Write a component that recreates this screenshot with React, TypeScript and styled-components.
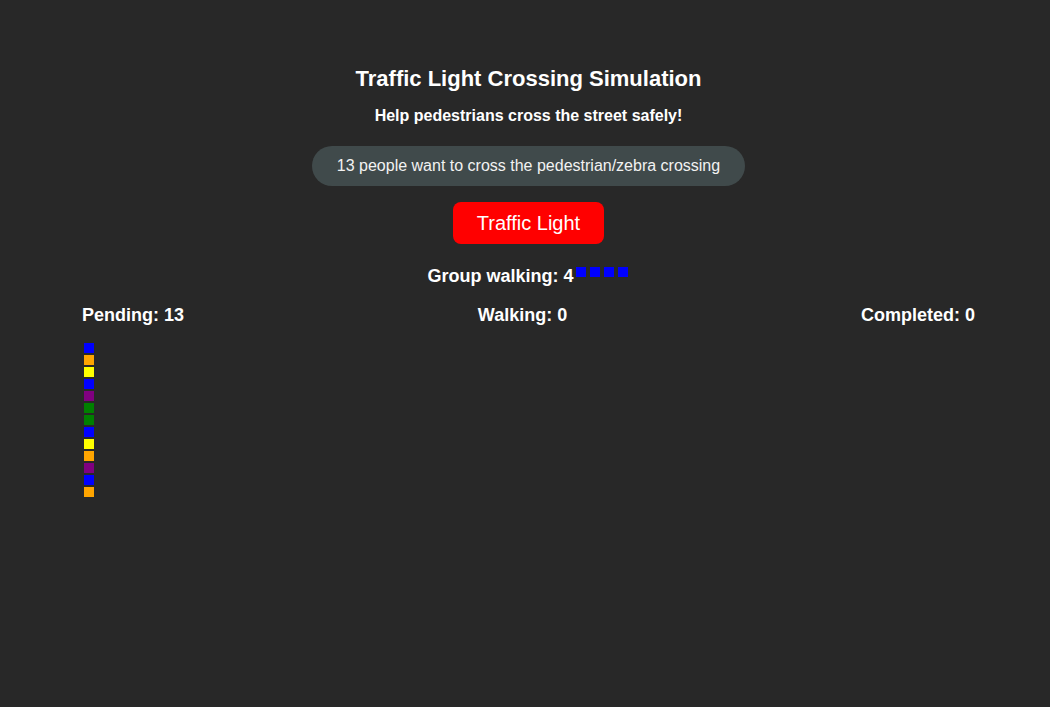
import React from "react";
import styled, { createGlobalStyle } from "styled-components";

const GlobalStyle = createGlobalStyle`
  html, body {
    margin: 0;
    padding: 0;
    background: #282828;
  }
  body {
    font-family: "Liberation Sans", Arial, sans-serif;
    color: #ffffff;
  }
`;

const Page = styled.div`
  min-height: 707px;
  box-sizing: border-box;
  padding: 66px 75px 0 82px;
  display: flex;
  flex-direction: column;
  align-items: center;
`;

const Title = styled.h1`
  margin: 0;
  font-size: 22px;
  line-height: 26px;
  font-weight: 700;
`;

const Subtitle = styled.p`
  margin: 13.5px 0 0;
  font-size: 16px;
  line-height: 20px;
  font-weight: 700;
`;

const Info = styled.div`
  margin-top: 20.5px;
  height: 40px;
  line-height: 40px;
  padding: 0 25px;
  border-radius: 20px;
  background: #404a4b;
  font-size: 16px;
  color: #f2f2f2;
`;

const LightButton = styled.button<{ $color: string }>`
  margin-top: 16px;
  height: 42px;
  padding: 0 24px;
  border: none;
  border-radius: 8px;
  background: ${(p) => p.$color};
  color: #ffffff;
  font-family: "Liberation Sans", Arial, sans-serif;
  font-size: 20px;
  line-height: 42px;
  cursor: pointer;
`;

const GroupLine = styled.div`
  margin-top: 21px;
  display: flex;
  align-items: flex-start;
  font-size: 18px;
  line-height: 22px;
  font-weight: 700;
`;

const GroupSquares = styled.span`
  display: flex;
  padding-top: 2px;
`;

const Square = styled.span<{ $color: string }>`
  display: block;
  width: 10px;
  height: 10px;
  background: ${(p) => p.$color};
`;

const GroupSquare = styled(Square)`
  margin: 0 2px;
`;

const Stats = styled.div`
  margin-top: 17px;
  align-self: stretch;
  display: flex;
  justify-content: space-between;
  align-items: flex-start;
`;

const Column = styled.div`
  display: flex;
  flex-direction: column;
`;

const Label = styled.div`
  font-size: 18px;
  line-height: 22px;
  font-weight: 700;
`;

const Queue = styled.div`
  margin-top: 17px;
  padding-left: 2px;
  display: flex;
  flex-direction: column;
  gap: 2px;
`;

const pending = [
  "#0000ff",
  "#ffa500",
  "#ffff00",
  "#0000ff",
  "#800080",
  "#008000",
  "#008000",
  "#0000ff",
  "#ffff00",
  "#ffa500",
  "#800080",
  "#0000ff",
  "#ffa500",
];

const group = ["#0000ff", "#0000ff", "#0000ff", "#0000ff"];

export default function App() {
  return (
    <>
      <GlobalStyle />
      <Page>
        <Title>Traffic Light Crossing Simulation</Title>
        <Subtitle>Help pedestrians cross the street safely!</Subtitle>
        <Info>{pending.length} people want to cross the pedestrian/zebra crossing</Info>
        <LightButton $color="#ff0000">Traffic Light</LightButton>
        <GroupLine>
          Group walking: {group.length}
          <GroupSquares>
            {group.map((c, i) => (
              <GroupSquare key={i} $color={c} />
            ))}
          </GroupSquares>
        </GroupLine>
        <Stats>
          <Column>
            <Label>Pending: {pending.length}</Label>
            <Queue>
              {pending.map((c, i) => (
                <Square key={i} $color={c} />
              ))}
            </Queue>
          </Column>
          <Column>
            <Label>Walking: 0</Label>
          </Column>
          <Column>
            <Label>Completed: 0</Label>
          </Column>
        </Stats>
      </Page>
    </>
  );
}
